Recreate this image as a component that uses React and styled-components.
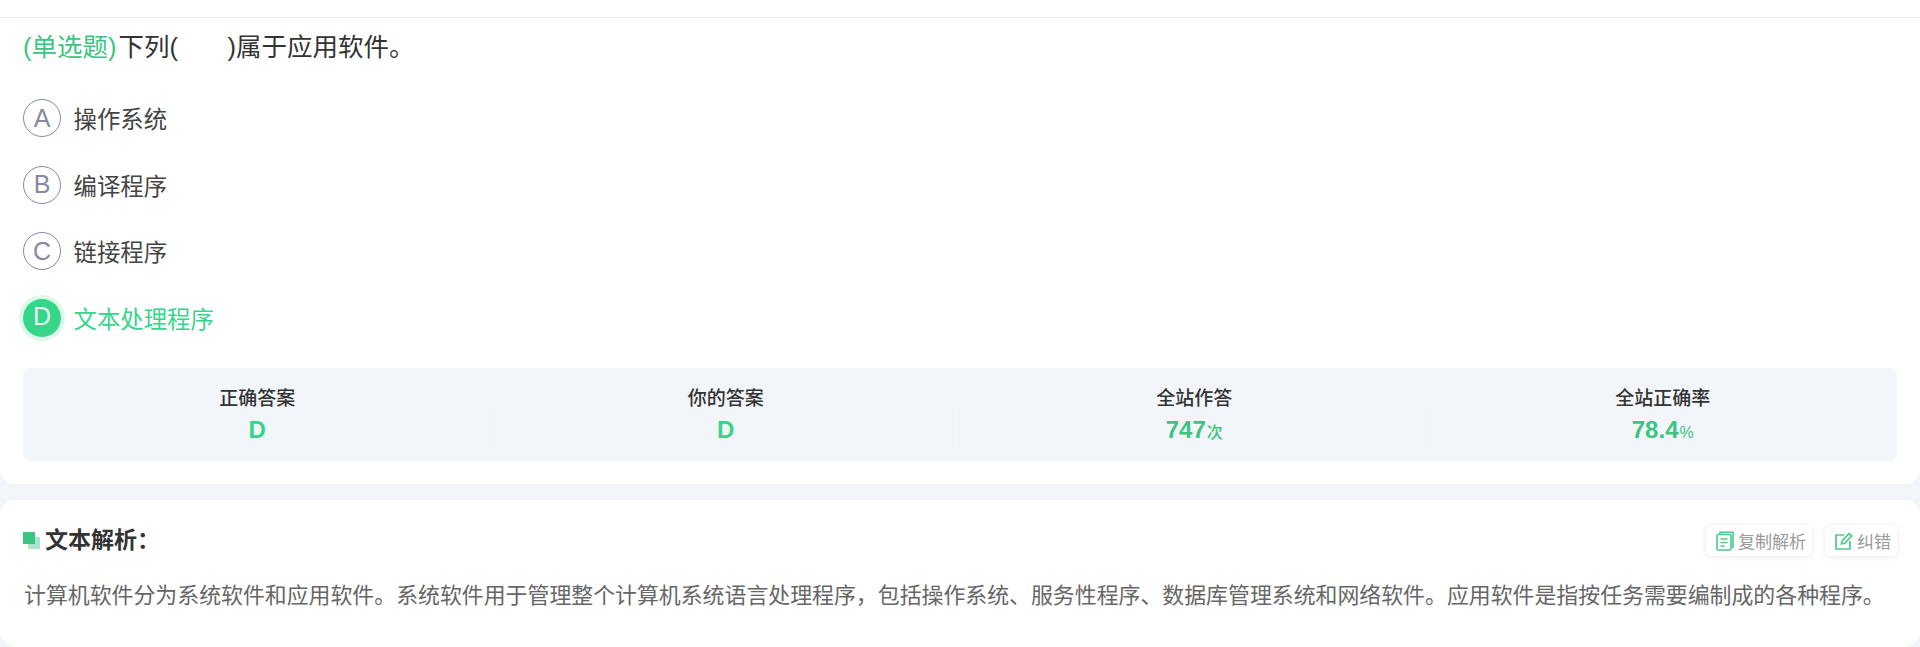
import React from "react";
import styled, { createGlobalStyle } from "styled-components";

const Global = createGlobalStyle`
  html, body { margin: 0; padding: 0; background: #f2f5f9; }
  body { font-family: "Liberation Sans", "Noto Sans CJK SC", sans-serif; height: 647px; overflow: hidden; }
  * { box-sizing: border-box; }
`;

const TopBar = styled.div`
  height: 18px;
  background: #fff;
  border-bottom: 1px solid #e9ebee;
`;

const QuestionCard = styled.section`
  height: 466px;
  background: #fff;
  border-radius: 0 0 16px 16px;
  padding: 14px 23px 0;
`;

const Title = styled.h2`
  margin: 0;
  height: 30px;
  font-size: 25.5px;
  line-height: 30px;
  font-weight: 400;
  color: #333;
  white-space: pre;
`;

const TypeTag = styled.span`
  color: #3cc480;
  margin-right: 2px;
`;

const OptionList = styled.ul`
  list-style: none;
  margin: 37px 0 0;
  padding: 0;
  display: flex;
  flex-direction: column;
  gap: 28.5px;
`;

const Option = styled.li`
  display: flex;
  align-items: center;
  gap: 12.5px;
  height: 38px;
  font-size: 23.4px;
  color: ${(p) => (p.$active ? "#35d68a" : "#444")};
`;

const Letter = styled.span`
  width: 38px;
  height: 38px;
  flex: none;
  border-radius: 50%;
  display: flex;
  align-items: center;
  justify-content: center;
  font-size: 25px;
  padding-bottom: ${(p) => (p.$active ? "3px" : "0")};
  border: ${(p) => (p.$active ? "none" : "1px solid #8589a3")};
  color: ${(p) => (p.$active ? "#e6fbf1" : "#8589a3")};
  background: ${(p) => (p.$active ? "#35d68a" : "#fff")};
  box-shadow: ${(p) => (p.$active ? "0 0 0 4px #dff8ec" : "none")};
`;

const Stats = styled.div`
  margin-top: 31px;
  height: 93px;
  background: #f2f5f9;
  border-radius: 8px;
  display: grid;
  grid-template-columns: repeat(4, 1fr);
`;

const Stat = styled.div`
  position: relative;
  display: flex;
  flex-direction: column;
  align-items: center;
  padding-top: 18px;
  &:not(:last-child)::after {
    content: "";
    position: absolute;
    right: 0;
    top: 39px;
    height: 43px;
    width: 1px;
    background: #edf0f4;
  }
`;

const StatLabel = styled.div`
  font-size: 19px;
  line-height: 26px;
  font-weight: 500;
  color: #333;
`;

const StatValue = styled.div`
  margin-top: 3px;
  font-size: 24px;
  line-height: 30px;
  font-weight: 700;
  color: ${(p) => (p.$soft ? "#3cc480" : "#35d68a")};
`;

const Unit = styled.span`
  font-size: 16px;
  font-weight: 500;
  margin-left: 1px;
`;

const AnalysisCard = styled.section`
  margin-top: 16px;
  height: 147px;
  background: #fff;
  border-radius: 16px;
  padding: 25px 23px 0;
`;

const AnalysisHead = styled.header`
  display: flex;
  align-items: center;
  justify-content: space-between;
  height: 31px;
`;

const HeadTitle = styled.h3`
  margin: 0;
  display: flex;
  align-items: center;
  gap: 5px;
  font-size: 23px;
  line-height: 31px;
  font-weight: 700;
  color: #333;
`;

const Actions = styled.div`
  display: flex;
  gap: 13px;
`;

const ActionButton = styled.button`
  height: 31px;
  padding: 0 6px 0 10px;
  border: none;
  border-radius: 6px;
  background: #fff;
  box-shadow: 0 1px 6px rgba(0, 0, 0, 0.09);
  display: flex;
  align-items: center;
  gap: 4px;
  font-family: inherit;
  font-size: 17px;
  color: #9a9a9a;
  svg { flex: none; }
`;

const Body = styled.p`
  margin: 24px 0 0 1px;
  font-size: 21.9px;
  line-height: 32px;
  color: #666;
  white-space: nowrap;
`;

const SquaresIcon = styled.svg`
  flex: none;
`;

const Squares = () => (
  <SquaresIcon width="17" height="17" viewBox="0 0 17 17">
    <rect x="5" y="5" width="12" height="12" fill="#abe5c9" />
    <rect x="0" y="0" width="12" height="12" fill="#3cc480" />
  </SquaresIcon>
);

const CopyIcon = () => (
  <svg width="18" height="20" viewBox="0 0 18 20" fill="none" stroke="#4cc98c" strokeWidth="1.6">
    <path d="M4 3V1.2h13V16h-2" />
    <rect x="1" y="3.5" width="14" height="15.5" rx="1" />
    <path d="M4.5 8h7M4.5 11.5h7M4.5 15h4" />
  </svg>
);

const EditIcon = () => (
  <svg width="18" height="18" viewBox="0 0 18 18" fill="none" stroke="#4cc98c" strokeWidth="1.7">
    <path d="M9 3H1v14h14V9" />
    <path d="M6.5 12l.6-3.2L14 1.5l2.6 2.6-6.9 7.2z" />
  </svg>
);

const options = [
  ["A", "操作系统"],
  ["B", "编译程序"],
  ["C", "链接程序"],
  ["D", "文本处理程序", true],
];

export default function App() {
  return (
    <>
      <Global />
      <TopBar />
      <QuestionCard>
        <Title>
          <TypeTag>(单选题)</TypeTag>下列(       )属于应用软件。
        </Title>
        <OptionList>
          {options.map(([l, t, a]) => (
            <Option key={l} $active={a}>
              <Letter $active={a}>{l}</Letter>
              {t}
            </Option>
          ))}
        </OptionList>
        <Stats>
          <Stat>
            <StatLabel>正确答案</StatLabel>
            <StatValue>D</StatValue>
          </Stat>
          <Stat>
            <StatLabel>你的答案</StatLabel>
            <StatValue>D</StatValue>
          </Stat>
          <Stat>
            <StatLabel>全站作答</StatLabel>
            <StatValue $soft>747<Unit>次</Unit></StatValue>
          </Stat>
          <Stat>
            <StatLabel>全站正确率</StatLabel>
            <StatValue $soft>78.4<Unit>%</Unit></StatValue>
          </Stat>
        </Stats>
      </QuestionCard>
      <AnalysisCard>
        <AnalysisHead>
          <HeadTitle>
            <Squares />
            文本解析：
          </HeadTitle>
          <Actions>
            <ActionButton><CopyIcon />复制解析</ActionButton>
            <ActionButton><EditIcon />纠错</ActionButton>
          </Actions>
        </AnalysisHead>
        <Body>计算机软件分为系统软件和应用软件。系统软件用于管理整个计算机系统语言处理程序，包括操作系统、服务性程序、数据库管理系统和网络软件。应用软件是指按任务需要编制成的各种程序。</Body>
      </AnalysisCard>
    </>
  );
}
